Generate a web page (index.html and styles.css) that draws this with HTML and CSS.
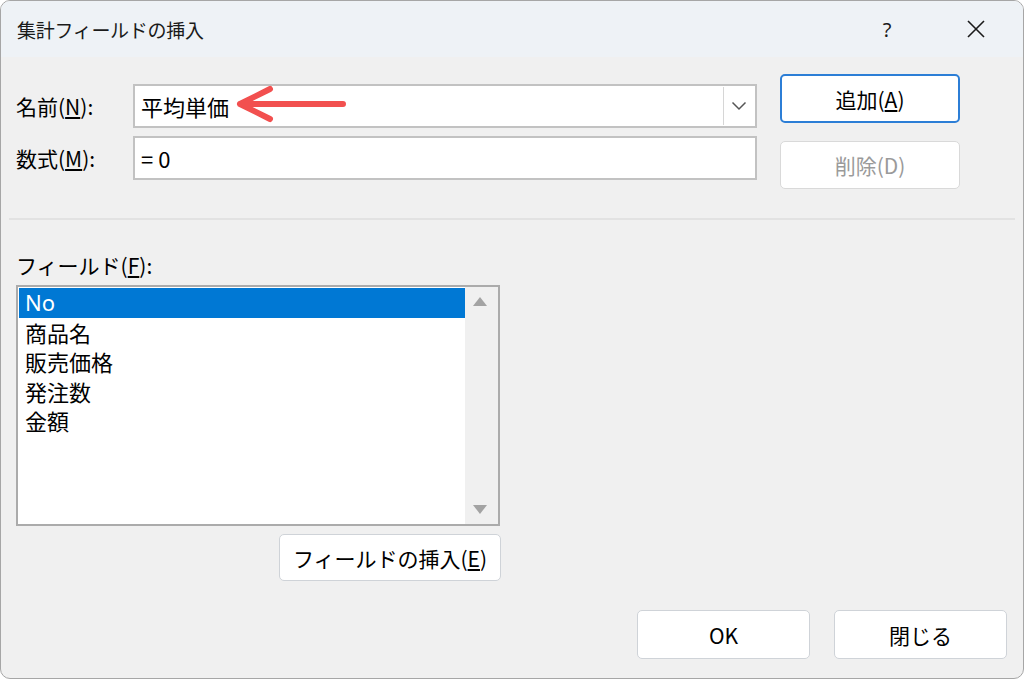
FILE: index.html
```html
<!DOCTYPE html>
<html lang="ja">
<head>
<meta charset="utf-8">
<title>集計フィールドの挿入</title>
<link rel="stylesheet" href="styles.css">
</head>
<body>
<div class="dialog">
  <div class="titlebar">
    <span class="title">集計フィールドの挿入</span>
    <span class="tb-btn help">?</span>
    <span class="tb-btn close">
      <svg width="20" height="20" viewBox="0 0 20 20"><path d="M2 2 L18 18 M18 2 L2 18" stroke="#1a1a1a" stroke-width="1.6" fill="none"/></svg>
    </span>
  </div>
  <div class="content">
    <div class="top">
      <div class="form">
        <div class="row">
          <label class="lbl">名前(<u>N</u>):</label>
          <div class="combo">
            <span class="value">平均単価</span>
            <span class="drop">
              <svg width="16" height="10" viewBox="0 0 16 10"><path d="M1.5 1.5 L8 8 L14.5 1.5" stroke="#555" stroke-width="1.5" fill="none"/></svg>
            </span>
          </div>
        </div>
        <div class="row">
          <label class="lbl">数式(<u>M</u>):</label>
          <div class="input"><span class="value">= 0</span></div>
        </div>
      </div>
      <div class="side">
        <button class="btn primary">追加(<u>A</u>)</button>
        <button class="btn disabled">削除(D)</button>
      </div>
    </div>
    <div class="sep"></div>
    <div class="fields-label">フィールド(<u>F</u>):</div>
    <div class="listbox">
      <div class="items">
        <div class="item sel">No</div>
        <div class="item">商品名</div>
        <div class="item">販売価格</div>
        <div class="item">発注数</div>
        <div class="item">金額</div>
      </div>
      <div class="scroll">
        <span class="tri up"></span>
        <span class="tri down"></span>
      </div>
    </div>
    <div class="insert-row">
      <button class="btn insert">フィールドの挿入(<u>E</u>)</button>
    </div>
    <div class="footer">
      <button class="btn foot">OK</button>
      <button class="btn foot">閉じる</button>
    </div>
  </div>
  <svg class="annot" width="120" height="40" viewBox="0 0 120 40">
    <path d="M5 20 L108 20 M5 20 L35 5 M5 20 L35 35" stroke="#f2504f" stroke-width="6" stroke-linecap="round" stroke-linejoin="round" fill="none"/>
  </svg>
</div>
</body>
</html>
```

FILE: styles.css
```css
* { box-sizing: border-box; }
html, body {
  margin: 0;
  padding: 0;
  background: #ffffff;
}
body {
  font-family: "Noto Sans CJK JP", "Noto Sans", sans-serif;
  color: #000;
  width: 1024px;
  height: 679px;
  overflow: hidden;
}
.dialog {
  position: relative;
  width: 1024px;
  height: 679px;
  border: 1px solid #a6a6a6;
  border-radius: 10px;
  background: #f0f0f0;
  overflow: hidden;
  display: flex;
  flex-direction: column;
}
.titlebar {
  height: 56px;
  flex: none;
  background: #eef2f6;
  display: flex;
  align-items: center;
  padding-left: 16px;
  padding-right: 17px;
}
.title {
  font-size: 19px;
  color: #1a1a1a;
  letter-spacing: -0.3px;
}
.tb-btn {
  width: 60px;
  height: 40px;
  display: flex;
  align-items: center;
  justify-content: center;
  font-size: 20px;
  color: #1a1a1a;
}
.help { margin-left: auto; margin-right: 29px; font-family: "Noto Sans", sans-serif; }
.content {
  flex: 1;
  display: flex;
  flex-direction: column;
  padding: 0 15px;
}
.top {
  display: flex;
  height: 160px;
}
.form {
  display: flex;
  flex-direction: column;
  gap: 8px;
  padding-top: 27px;
}
.row {
  display: flex;
  align-items: center;
}
.lbl {
  width: 117px;
  font-size: 21px;
  padding-left: 0;
}
.combo, .input {
  width: 624px;
  height: 44px;
  background: #fff;
  border: 2px solid #c2c2c2;
  display: flex;
  align-items: center;
  position: relative;
}
.value {
  font-size: 22px;
  padding-left: 6px;
}
.drop {
  position: absolute;
  right: 1px;
  top: 1px;
  bottom: 1px;
  width: 31px;
  background: #fff;
  border-left: 1px solid #d6d6d6;
  display: flex;
  align-items: center;
  justify-content: center;
}
.side {
  display: flex;
  flex-direction: column;
  margin-left: 23px;
  padding-top: 17px;
  gap: 18px;
}
.btn {
  font-family: "Noto Sans CJK JP", "Noto Sans", sans-serif;
  font-size: 21px;
  color: #000;
  background: #fff;
  border: 1px solid #cfd3d8;
  border-radius: 5px;
  padding: 0;
  display: flex;
  align-items: center;
  justify-content: center;
}
.side .btn {
  width: 180px;
  height: 49px;
}
.btn.primary {
  border: 2px solid #2c7ed6;
}
.btn.disabled {
  color: #9a9a9a;
  border-color: #d9d9d9;
  height: 48px;
}
.sep {
  height: 2px;
  background: #e2e2e2;
  margin: 1px -7px 0 -7px;
}
.fields-label {
  font-size: 21px;
  margin-top: 30px;
  padding-left: 0;
  height: 30px;
  line-height: 30px;
}
.listbox {
  margin-top: 5px;
  width: 484px;
  height: 241px;
  border: 2px solid #ababab;
  background: #fff;
  display: flex;
  padding: 1px 0 1px 1px;
}
.items {
  flex: 1;
}
.item {
  height: 29.6px;
  font-size: 22px;
  line-height: 29px;
  padding-left: 6px;
}
.item.sel {
  background: #0078d4;
  color: #fff;
  font-family: "Noto Sans", "Noto Sans CJK JP", sans-serif;
  font-size: 22px;
}
.scroll {
  width: 33px;
  margin: -1px 0 -1px 0;
  background: #f0f0f0;
  position: relative;
}
.tri {
  position: absolute;
  left: 8px;
  width: 0;
  height: 0;
  border-left: 7px solid transparent;
  border-right: 7px solid transparent;
}
.tri.up {
  top: 10px;
  border-bottom: 9px solid #a3a3a3;
}
.tri.down {
  bottom: 10px;
  border-top: 9px solid #a3a3a3;
}
.insert-row {
  width: 485px;
  display: flex;
  justify-content: flex-end;
  margin-top: 8px;
}
.btn.insert {
  width: 222px;
  height: 47px;
}
.footer {
  display: flex;
  justify-content: flex-end;
  gap: 24px;
  margin-top: 29px;
  padding-right: 1px;
}
.btn.foot {
  width: 173px;
  height: 49px;
}
.annot {
  position: absolute;
  left: 234px;
  top: 83px;
}
```
